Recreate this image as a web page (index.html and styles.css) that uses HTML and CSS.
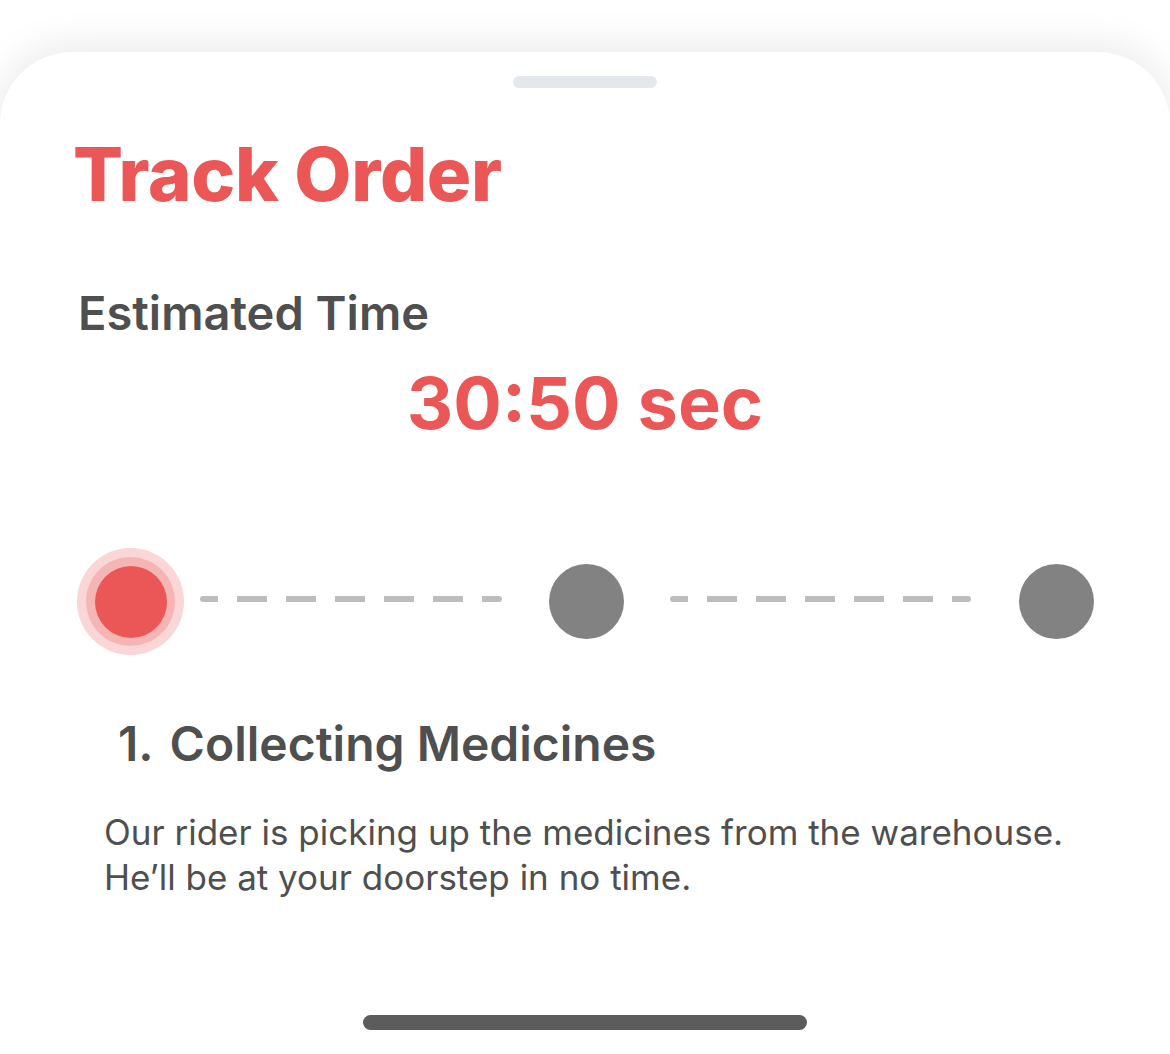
FILE: index.html
```html
<!DOCTYPE html>
<html>
<head>
<meta charset="utf-8">
<link rel="stylesheet" href="styles.css">
</head>
<body>
<div class="sheet">
  <div class="handle"></div>
  <h1 class="title">Track Order</h1>
  <div class="est-label">Estimated Time</div>
  <div class="est-time">30:50 sec</div>
  <div class="stepper">
    <div class="step-active"><div class="ring2"><div class="dot-red"></div></div></div>
    <div class="dashes"></div>
    <div class="dot-gray"></div>
    <div class="dashes"></div>
    <div class="dot-gray"></div>
  </div>
  <h2 class="step-title"><span class="num">1.</span>Collecting Medicines</h2>
  <p class="step-desc">Our rider is picking up the medicines from the warehouse.<br>He’ll be at your doorstep in no time.</p>
  <div class="spacer"></div>
  <div class="home-bar"></div>
</div>
</body>
</html>
```

FILE: styles.css
```css
html, body {
  margin: 0;
  padding: 0;
  background: #ffffff;
}
body {
  width: 1170px;
  height: 1054px;
  overflow: hidden;
  font-family: "Inter", "Liberation Sans", sans-serif;
}
.sheet {
  margin-top: 52px;
  height: 1002px;
  background: #ffffff;
  border-radius: 72px 72px 0 0;
  box-shadow: 0 -6px 40px rgba(0, 0, 0, 0.09);
  display: flex;
  flex-direction: column;
  box-sizing: border-box;
}
.handle {
  align-self: center;
  width: 144px;
  height: 12px;
  border-radius: 6px;
  background: #e4e8ec;
  margin-top: 24px;
}
.title {
  margin: 42px 0 0 73px;
  font-size: 74px;
  font-weight: 800;
  line-height: 88px;
  color: #eb5757;
  letter-spacing: -0.3px;
}
.est-label {
  margin: 66px 0 0 78px;
  font-size: 47px;
  font-weight: 600;
  line-height: 58px;
  color: #4f4f4f;
}
.est-time {
  margin-top: 18px;
  text-align: center;
  font-size: 72px;
  font-weight: 700;
  line-height: 86px;
  color: #eb5757;
}
.stepper {
  margin: 102px 0 0 77px;
  width: 1017px;
  display: flex;
  align-items: center;
}
.step-active {
  width: 107px;
  height: 107px;
  border-radius: 50%;
  background: #fad6d6;
  display: flex;
  align-items: center;
  justify-content: center;
  flex-shrink: 0;
}
.ring2 {
  width: 89px;
  height: 89px;
  border-radius: 50%;
  background: #f6b5b5;
  display: flex;
  align-items: center;
  justify-content: center;
}
.dot-red {
  width: 72px;
  height: 72px;
  border-radius: 50%;
  background: #eb5757;
}
.dot-gray {
  width: 75px;
  height: 75px;
  border-radius: 50%;
  background: #828282;
  flex-shrink: 0;
}
.dashes {
  flex: 1;
  height: 6px;
  margin: -6px 0 0 0;
  background: repeating-linear-gradient(90deg, #bdbdbd 0 30px, transparent 30px 49px);
  background-position: -12px 0;
  border-radius: 3px;
}
.stepper .dashes:nth-child(2) { margin-left: 16px; margin-right: 47px; }
.stepper .dashes:nth-child(4) { margin-left: 46px; margin-right: 48px; }
.step-title {
  margin: 59px 0 0 118px;
  font-size: 48px;
  font-weight: 600;
  line-height: 60px;
  color: #4f4f4f;
}
.num {
  margin-right: 16px;
}
.step-desc {
  margin: 36px 0 0 104px;
  font-size: 35px;
  font-weight: 400;
  line-height: 45px;
  color: #4f4f4f;
}
.spacer {
  flex: 1;
}
.home-bar {
  align-self: center;
  width: 444px;
  height: 15px;
  border-radius: 8px;
  background: #5c5c5c;
  margin-bottom: 24px;
}
```
